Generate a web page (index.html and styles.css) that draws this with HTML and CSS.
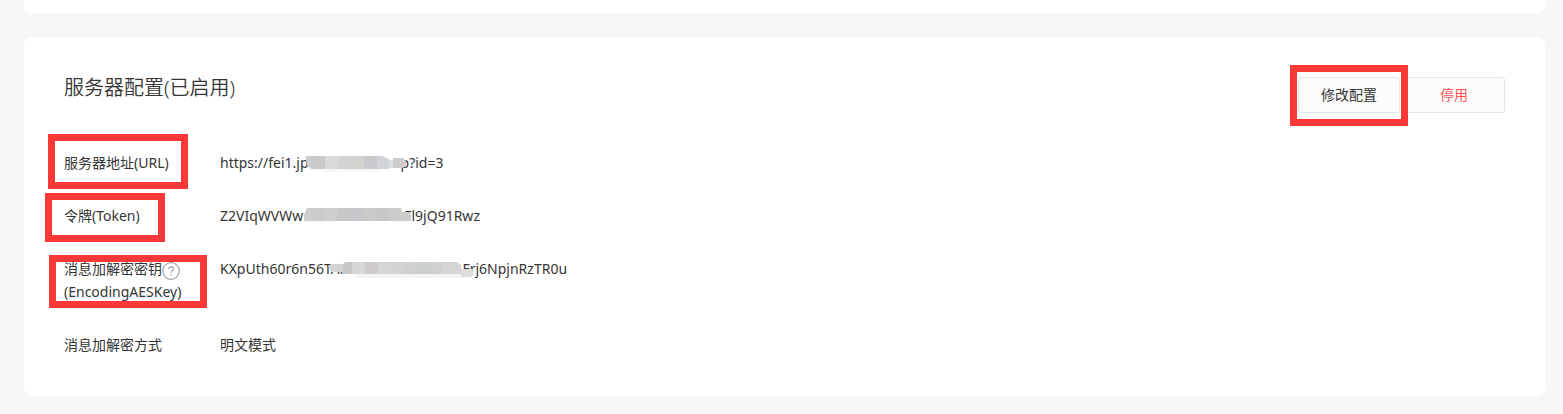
FILE: index.html
```html
<!DOCTYPE html>
<html lang="zh-CN">
<head>
<meta charset="utf-8">
<title>服务器配置</title>
<link rel="stylesheet" href="styles.css">
</head>
<body>
<main class="page">
  <section class="card card-previous"></section>
  <section class="card">
    <header class="card-header">
      <h2 class="card-title">服务器配置(已启用)</h2>
      <div class="actions">
        <div class="marked"><button type="button" class="btn">修改配置</button><span class="mark mark-button"></span></div>
        <button type="button" class="btn btn-danger">停用</button>
      </div>
    </header>
    <dl class="fields">
      <div class="field">
        <dt class="label marked">服务器地址(URL)<span class="mark mark-url"></span></dt>
        <dd class="value"><span>https://fei1.jp</span><span class="gap gap-url"></span><span>p?id=3</span>
          <svg class="smudge smudge-url" width="104" height="18" viewBox="0 0 104 18">
            <path d="M14 14h62v3H20z" fill="#f7f7f7"/>
            <path d="M2 1h10v13H8l-4-4z" fill="#cdcfd0"/>
            <path d="M7 1h15v13H9z" fill="#c7c9ca"/>
            <path d="M22 1h13v13H22z" fill="#dbd9dc"/><path d="M35 1h13v13H35z" fill="#d5d3d3"/>
            <path d="M48 1h13v13H48z" fill="#d4d2cf"/><path d="M61 1h13v13H61z" fill="#cbc9cd"/>
            <path d="M74 1h5l7 3v10H74z" fill="#d2d2d9"/><path d="M86 5h5v8h-5z" fill="#dbdde4"/>
            <path d="M90 3h10l3 3v5l-4 2h-9z" fill="#cfcccc"/>
          </svg>
        </dd>
      </div>
      <div class="field">
        <dt class="label marked">令牌(Token)<span class="mark mark-token"></span></dt>
        <dd class="value"><span>Z2VIqWVWw</span><span class="gap gap-token"></span><span>Fl9jQ91Rwz</span>
          <svg class="smudge smudge-token" width="110" height="16" viewBox="0 0 110 16">
            <path d="M3 1h9v13H0V8z" fill="#cecece"/>
            <path d="M7 1h13v13H7z" fill="#cbcbcd"/><path d="M20 1h13v13H20z" fill="#cfcfd0"/>
            <path d="M33 1h13v13H33z" fill="#c9c8c8"/><path d="M46 1h13v13H46z" fill="#c9c7cd"/>
            <path d="M59 1h13v13H59z" fill="#cbcaca"/><path d="M72 1h13v13H72z" fill="#c8c7c9"/>
            <path d="M85 1h12l1 4h7l2 3v6H85z" fill="#cdccca"/>
          </svg>
        </dd>
      </div>
      <div class="field">
        <dt class="label marked">消息加解密密钥<svg class="help" width="18" height="18" viewBox="0 0 18 18" role="img" aria-label="帮助"><circle cx="9" cy="9" r="8.3" fill="none" stroke="#a5a5a5" stroke-width="1.2"/><path d="M6.5 7.1C6.5 5.6 7.5 4.8 9 4.8s2.5.9 2.5 2.1c0 1.8-2.4 1.9-2.4 3.9" fill="none" stroke="#a0a0a0" stroke-width="1.2"/><circle cx="9.1" cy="12.9" r=".8" fill="#a0a0a0"/></svg><br>(EncodingAESKey)<span class="mark mark-key"></span></dt>
        <dd class="value"><span>KXpUth60r6n56TAr</span><span class="gap gap-key"></span><span>Frj6NpjnRzTR0u</span>
          <svg class="smudge smudge-key" width="150" height="20" viewBox="0 0 150 20">
            <path d="M27 13h120l-6 4H32z" fill="#f4f4f4"/>
            <path d="M1 5l3-2h12l2-2h6v10H4z" fill="#d2d3d3"/>
            <path d="M19 1h6v12h-9V4z" fill="#c8c8cb"/><path d="M25 1h13v12H25z" fill="#d5d6d6"/>
            <path d="M38 1h13v12H38z" fill="#cfcbcc"/><path d="M51 1h13v12H51z" fill="#d6d6d8"/>
            <path d="M64 1h13v12H64z" fill="#d2d3d4"/><path d="M77 1h13v12H77z" fill="#cfd0d0"/>
            <path d="M90 1h13v12H90z" fill="#ccd0cf"/><path d="M103 1h13v12h-13z" fill="#d1cfd0"/>
            <path d="M116 1h14l4 3v9h-18z" fill="#d4d5d5"/><path d="M134 8h11l2 3-2 5h-11z" fill="#dededf"/>
          </svg>
        </dd>
      </div>
      <div class="field">
        <dt class="label">消息加解密方式</dt>
        <dd class="value">明文模式</dd>
      </div>
    </dl>
  </section>
</main>
</body>
</html>
```
FILE: styles.css
```css
* { box-sizing: border-box; }

body {
  margin: 0;
  background: #f6f7f9;
  color: #353535;
  font: 14px/23px "Noto Sans", "Noto Sans CJK SC", sans-serif;
}

.page {
  display: flex;
  flex-direction: column;
  gap: 24px;
  padding: 0 18px 18px 24px;
}

.card {
  padding: 40px;
  border-radius: 8px;
  background: #fff;
}

.card-previous {
  padding: 13px 0 0;
  border-radius: 0 0 8px 8px;
}

.card-header {
  display: flex;
  align-items: flex-start;
  justify-content: space-between;
  margin-bottom: 38px;
}

.card-title {
  margin: 0;
  font-size: 20px;
  font-weight: 350;
  line-height: 22px;
}

.actions {
  display: flex;
  gap: 3px;
}

.btn {
  display: block;
  width: 102px;
  height: 36px;
  padding: 0 0 2px;
  border: 1px solid #e4e6e9;
  border-radius: 3px;
  background: #fbfbfb;
  color: inherit;
  font: inherit;
  cursor: pointer;
}

.btn-danger { color: #fa5151; }

.fields {
  display: flex;
  flex-direction: column;
  gap: 30px;
  margin: 0;
}

.field { display: flex; }

.label {
  flex: none;
  width: 156px;
}

.value {
  position: relative;
  display: flex;
  height: 23px;
  margin: 0;
}

.help {
  height: 18px;
  margin: -3px 0;
  vertical-align: -3px;
}

.marked { position: relative; }

.mark {
  position: absolute;
  border: 7px solid #fb3838;
  pointer-events: none;
}

.mark-button { inset: -12px -8px -13px -8px; }
.mark-url { top: -17px; left: -16px; width: 140px; height: 55px; }
.mark-token { top: -11px; left: -19px; width: 120px; height: 49px; }
.mark-key { top: -2px; left: -15px; width: 158px; height: 53px; }

.gap-url { width: 92px; }
.gap-token { width: 101px; }
.gap-key { width: 117px; }

.smudge { position: absolute; }
.smudge-url { top: 4px; left: 83px; }
.smudge-token { top: 3px; left: 84px; }
.smudge-key { top: 4px; left: 107px; }
```
